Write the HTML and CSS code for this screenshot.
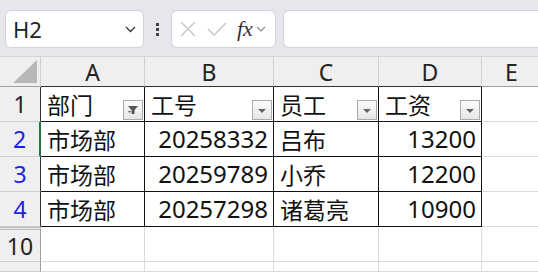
FILE: index.html
```html
<!DOCTYPE html>
<html lang="zh-CN">
<head>
  <meta charset="UTF-8" />
  <title>工作表</title>
  <link rel="stylesheet" href="styles.css">
</head>
<body>
  <div class="toolbar">
    <div class="name-box">
      <span class="cell-ref">H2</span>
      <svg class="chev" width="11" height="7" viewBox="0 0 11 7"><path d="M1 1l4.5 4.5L10 1" fill="none" stroke="#333" stroke-width="1.3"/></svg>
    </div>
    <div class="grip"><i></i><i></i><i></i></div>
    <div class="fx-box">
      <svg width="18" height="18" viewBox="0 0 18 18"><path d="M2 2l14 14M16 2L2 16" stroke="#c4c4c4" stroke-width="1.3"/></svg>
      <svg class="tick" width="20" height="16" viewBox="0 0 20 16"><path d="M1 8l6 6L19 2" fill="none" stroke="#c4c4c4" stroke-width="1.3"/></svg>
      <span class="fx">fx</span>
      <svg width="10" height="6" viewBox="0 0 10 6"><path d="M1 1l4 4 4-4" fill="none" stroke="#888" stroke-width="1.1"/></svg>
    </div>
    <div class="formula"></div>
  </div>

  <div class="sheet">
    <div class="corner"><svg width="24" height="23" viewBox="0 0 24 23"><path d="M24 0V23H0z" fill="#b8b8b8"/></svg></div>
    <div class="col-head edge">A</div>
    <div class="col-head edge">B</div>
    <div class="col-head edge">C</div>
    <div class="col-head edge">D</div>
    <div class="col-head">E</div>

    <div class="row-head dark">1</div>
    <div class="cell data">部门<span class="filter"><svg width="12" height="10" viewBox="0 0 12 10"><path d="M1 1h10L7.5 5v4h-3V5z" fill="#555"/><path d="M1 6h3L2.5 8z" fill="#555"/></svg></span></div>
    <div class="cell data">工号<span class="filter"><i class="tri"></i></span></div>
    <div class="cell data">员工<span class="filter"><i class="tri"></i></span></div>
    <div class="cell data">工资<span class="filter"><i class="tri"></i></span></div>
    <div class="cell"></div>

    <div class="row-head active blue">2</div>
    <div class="cell data">市场部</div>
    <div class="cell data num">20258332</div>
    <div class="cell data">吕布</div>
    <div class="cell data num">13200</div>
    <div class="cell"></div>

    <div class="row-head dark blue">3</div>
    <div class="cell data">市场部</div>
    <div class="cell data num">20259789</div>
    <div class="cell data">小乔</div>
    <div class="cell data num">12200</div>
    <div class="cell"></div>

    <div class="row-head dark blue">4</div>
    <div class="cell data">市场部</div>
    <div class="cell data num">20257298</div>
    <div class="cell data">诸葛亮</div>
    <div class="cell data num">10900</div>
    <div class="cell"></div>

    <div class="row-head hidden-above">10</div>
    <div class="cell"></div>
    <div class="cell"></div>
    <div class="cell"></div>
    <div class="cell"></div>
    <div class="cell"></div>

    <div class="row-head"></div>
    <div class="cell"></div>
    <div class="cell"></div>
    <div class="cell"></div>
    <div class="cell"></div>
    <div class="cell"></div>
  </div>
</body>
</html>
```

FILE: styles.css
```css
* {
  box-sizing: border-box;
  font-family: "Noto Sans", "Noto Sans CJK SC", sans-serif;
}

body {
  margin: 0;
  background: #fff;
  overflow: hidden;
  width: 538px;
  height: 272px;
}

.toolbar {
  display: flex;
  align-items: center;
  height: 57px;
  padding: 10px 0 8px 5px;
  background: #e7e6ec;
  border-bottom: 1px solid #d6d6da;
  overflow: hidden;
}

.toolbar > * {
  flex: none;
}

.name-box {
  display: flex;
  align-items: center;
  justify-content: space-between;
  width: 139px;
  height: 38px;
  padding: 0 7px 0 7px;
  background: #fff;
  border: 1px solid #d2d2d8;
  border-radius: 6px;
}

.cell-ref {
  font-size: 22px;
  color: #222;
}

.grip {
  display: flex;
  flex-direction: column;
  gap: 2px;
  width: 27px;
  align-items: center;
}

.grip i {
  width: 3px;
  height: 3px;
  background: #444;
}

.fx-box {
  display: flex;
  align-items: center;
  gap: 9px;
  width: 105px;
  height: 38px;
  padding-left: 7px;
  background: #fff;
  border: 1px solid #d2d2d8;
  border-radius: 6px;
}

.fx-box .tick {
  margin-left: 1px;
}

.fx {
  font-family: "Liberation Serif", "DejaVu Serif", serif;
  font-style: italic;
  font-size: 22px;
  color: #333;
  margin-left: 1px;
  margin-right: -6px;
}

.formula {
  width: 300px;
  height: 38px;
  margin-left: 7px;
  background: #fff;
  border: 1px solid #d2d2d8;
  border-radius: 6px;
}

.sheet {
  display: grid;
  grid-template-columns: 41px 104px 129px 105px 103px 60px;
  grid-template-rows: 30px repeat(5, 35px) 10px;
}

.corner {
  display: flex;
  justify-content: flex-end;
  align-items: flex-end;
  padding: 0 3px 3px 0;
  background: #efefef;
  border-right: 1px solid #cfcfcf;
  border-bottom: 1px solid #9f9f9f;
}

.col-head {
  display: flex;
  align-items: center;
  justify-content: center;
  font-size: 23px;
  color: #222;
  background: #efefef;
  border-right: 1px solid #cfcfcf;
  border-bottom: 1px solid #9f9f9f;
}

.col-head.edge {
  border-bottom-color: #333;
}

.row-head {
  display: flex;
  align-items: center;
  justify-content: center;
  font-size: 23px;
  color: #222;
  background: #efefef;
  border-right: 1px solid #9f9f9f;
  border-bottom: 1px solid #cfcfcf;
}

.row-head.dark {
  border-right-color: #333;
}

.row-head.active {
  border-right: 2px solid #217346;
}

.row-head.blue {
  color: #1f1fe8;
}

.row-head.hidden-above {
  border-top: 3px double #b8b8b8;
}

.cell {
  display: flex;
  align-items: center;
  justify-content: space-between;
  padding: 0 1px 1px 6px;
  font-size: 23px;
  color: #111;
  border-right: 1px solid #dadada;
  border-bottom: 1px solid #dadada;
}

.cell.data {
  border-right-color: #111;
  border-bottom-color: #111;
}

.cell.num {
  justify-content: flex-end;
  padding-right: 5px;
  font-size: 24px;
}

.filter {
  display: flex;
  align-items: center;
  justify-content: center;
  align-self: flex-end;
  width: 20px;
  height: 20px;
  border: 1px solid #ababab;
  background: linear-gradient(#fbfbfb, #e6e6e6);
}

.tri {
  width: 0;
  height: 0;
  border-left: 4px solid transparent;
  border-right: 4px solid transparent;
  border-top: 4px solid #666;
  margin-top: 2px;
}
```
